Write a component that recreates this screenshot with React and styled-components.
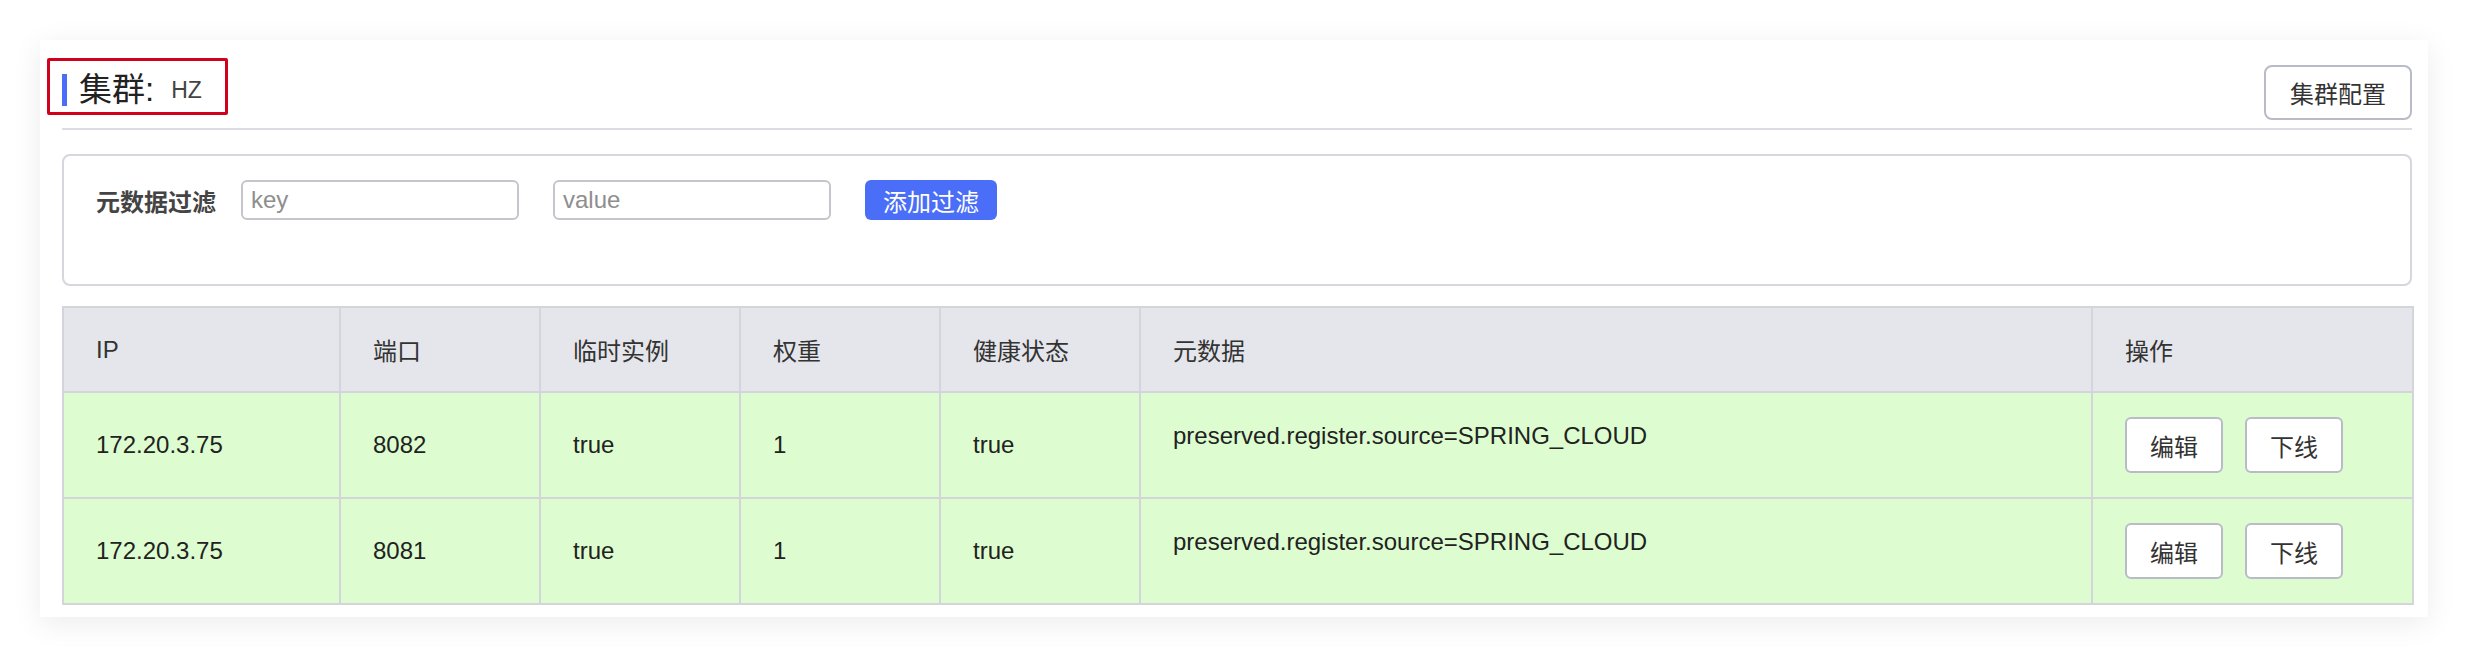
import React from "react";
import styled, { createGlobalStyle } from "styled-components";

const GlobalStyle = createGlobalStyle`
  html, body {
    margin: 0;
    padding: 0;
    background: #ffffff;
    font-family: "Liberation Sans", "Noto Sans CJK SC", sans-serif;
    color: #333;
  }
`;

const Page = styled.div`
  padding: 40px;
`;

const Card = styled.div`
  background: #fff;
  padding: 25px 16px 12px 22px;
  box-shadow: 0 6px 28px rgba(0, 0, 0, 0.08);
`;

const Header = styled.div`
  display: flex;
  align-items: center;
  justify-content: space-between;
  padding-bottom: 8px;
  border-bottom: 2px solid #dcdce2;
`;

const TitleWrap = styled.div`
  position: relative;
  display: flex;
  align-items: center;
  height: 32px;
  margin-top: -6px;
`;

const Annotation = styled.span`
  position: absolute;
  top: -16px;
  bottom: -9px;
  left: -15px;
  right: -26px;
  border: 3px solid #d0021b;
  border-radius: 2px;
  pointer-events: none;
`;

const Bar = styled.span`
  width: 5px;
  height: 32px;
  background: #4a6ef7;
  margin-right: 12px;
`;

const TitleText = styled.span`
  font-size: 33px;
  color: #222;
  line-height: 32px;
`;

const ClusterName = styled.span`
  font-size: 23px;
  color: #444;
  margin-left: 17px;
  line-height: 32px;
`;

const Button = styled.button`
  font-family: inherit;
  font-size: 24px;
  color: #333;
  background: #fff;
  border: 2px solid #b9bbc6;
  border-radius: ${(p) => (p.$large ? "8px" : "6px")};
  height: ${(p) => (p.$large ? "55px" : "56px")};
  width: ${(p) => (p.$large ? "148px" : "98px")};
  padding: 0;
  cursor: pointer;
`;

const FilterBox = styled.div`
  margin-top: 24px;
  border: 2px solid #d6d7dd;
  border-radius: 8px;
  padding: 24px 32px 64px;
  display: flex;
  align-items: center;
`;

const FilterLabel = styled.span`
  font-size: 24px;
  font-weight: bold;
  color: #444;
  margin-right: 25px;
`;

const Input = styled.input`
  box-sizing: border-box;
  width: 278px;
  height: 40px;
  border: 2px solid #c4c5cd;
  border-radius: 6px;
  padding: 0 8px;
  font-family: inherit;
  font-size: 24px;
  margin-right: 34px;
  outline: none;

  &::placeholder {
    color: #8e8e8e;
  }
`;

const PrimaryButton = styled.button`
  width: 132px;
  height: 40px;
  border: none;
  border-radius: 6px;
  background: #4a6ef7;
  color: #fff;
  font-family: inherit;
  font-size: 24px;
  padding: 0;
  cursor: pointer;
`;

const Table = styled.table`
  margin-top: 20px;
  width: 100%;
  border-collapse: collapse;
  table-layout: fixed;
  font-size: 24px;
  color: #222;
`;

const Th = styled.th`
  height: 83px;
  padding: 0 32px;
  background: #e5e6eb;
  border: 2px solid #d4d5db;
  text-align: left;
  font-weight: normal;
  color: #333;
`;

const Td = styled.td`
  height: 106px;
  padding: ${(p) => (p.$top ? "25px 32px 0" : "0 32px")};
  background: #ddfdd0;
  border: 2px solid #d4d5db;
  vertical-align: ${(p) => (p.$top ? "top" : "middle")};
  line-height: 36px;
  box-sizing: border-box;
`;

const Actions = styled.div`
  display: flex;
  gap: 22px;
`;

const columns = [
  { title: "IP", width: 277 },
  { title: "端口", width: 200 },
  { title: "临时实例", width: 200 },
  { title: "权重", width: 200 },
  { title: "健康状态", width: 200 },
  { title: "元数据", width: 952 },
  { title: "操作", width: 321 },
];

const instances = [
  { ip: "172.20.3.75", port: 8082, ephemeral: "true", weight: 1, healthy: "true", meta: "preserved.register.source=SPRING_CLOUD" },
  { ip: "172.20.3.75", port: 8081, ephemeral: "true", weight: 1, healthy: "true", meta: "preserved.register.source=SPRING_CLOUD" },
];

export default function App() {
  return (
    <Page>
      <GlobalStyle />
      <Card>
        <Header>
          <TitleWrap>
            <Annotation />
            <Bar />
            <TitleText>集群:</TitleText>
            <ClusterName>HZ</ClusterName>
          </TitleWrap>
          <Button $large>集群配置</Button>
        </Header>

        <FilterBox>
          <FilterLabel>元数据过滤</FilterLabel>
          <Input placeholder="key" />
          <Input placeholder="value" />
          <PrimaryButton>添加过滤</PrimaryButton>
        </FilterBox>

        <Table>
          <colgroup>
            {columns.map((c) => (
              <col key={c.title} style={{ width: c.width }} />
            ))}
          </colgroup>
          <thead>
            <tr>
              {columns.map((c) => (
                <Th key={c.title}>{c.title}</Th>
              ))}
            </tr>
          </thead>
          <tbody>
            {instances.map((row) => (
              <tr key={row.port}>
                <Td>{row.ip}</Td>
                <Td>{row.port}</Td>
                <Td>{row.ephemeral}</Td>
                <Td>{row.weight}</Td>
                <Td>{row.healthy}</Td>
                <Td $top>{row.meta}</Td>
                <Td>
                  <Actions>
                    <Button>编辑</Button>
                    <Button>下线</Button>
                  </Actions>
                </Td>
              </tr>
            ))}
          </tbody>
        </Table>
      </Card>
    </Page>
  );
}
